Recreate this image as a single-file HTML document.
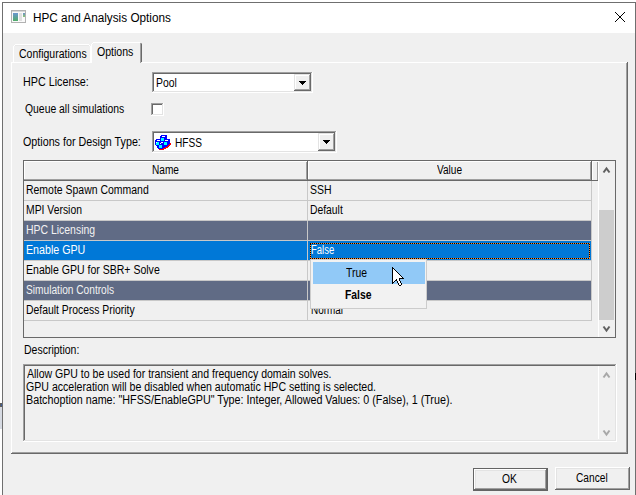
<!DOCTYPE html>
<html><head><meta charset="utf-8"><style>
html,body{margin:0;padding:0;width:636px;height:495px;overflow:hidden;background:#fff}
div{position:absolute}
.t{font-family:"Liberation Sans",sans-serif;white-space:nowrap;transform-origin:0 0}
</style></head><body>
<div style="left:0px;top:0px;width:636px;height:495px;background:#ffffff;"></div>
<div style="left:2px;top:2px;width:634px;height:493px;background:#6f6f6f;"></div>
<div style="left:3px;top:3px;width:632px;height:492px;background:#ffffff;"></div>
<div style="left:3px;top:33px;width:632px;height:462px;background:#f0f0f0;"></div>
<div style="left:11px;top:10px;width:15px;height:13px;background:#b2b2b2;"></div>
<div style="left:12px;top:11px;width:13px;height:11px;background:#d8d8d8;"></div>
<div style="left:12px;top:12px;width:13px;height:10px;background:#fafafa;"></div>
<div style="left:13px;top:13px;width:5px;height:8px;background:;background:linear-gradient(180deg,#6b96d0,#50ac68)"></div>
<div style="left:19px;top:13px;width:3px;height:8px;background:#e0e0e0;"></div>
<div style="left:23px;top:13px;width:2px;height:4px;background:;background:linear-gradient(180deg,#6a90c8,#8ac870)"></div>
<svg style="position:absolute;left:615px;top:12px" width="10" height="10" shape-rendering="crispEdges" fill="#000"><rect x="0" y="0" width="1" height="1"/><rect x="9" y="0" width="1" height="1"/><rect x="1" y="1" width="1" height="1"/><rect x="8" y="1" width="1" height="1"/><rect x="2" y="2" width="1" height="1"/><rect x="7" y="2" width="1" height="1"/><rect x="3" y="3" width="1" height="1"/><rect x="6" y="3" width="1" height="1"/><rect x="4" y="4" width="1" height="1"/><rect x="5" y="4" width="1" height="1"/><rect x="5" y="5" width="1" height="1"/><rect x="4" y="5" width="1" height="1"/><rect x="6" y="6" width="1" height="1"/><rect x="3" y="6" width="1" height="1"/><rect x="7" y="7" width="1" height="1"/><rect x="2" y="7" width="1" height="1"/><rect x="8" y="8" width="1" height="1"/><rect x="1" y="8" width="1" height="1"/><rect x="9" y="9" width="1" height="1"/><rect x="0" y="9" width="1" height="1"/><rect x="4" y="4" width="2" height="2"/></svg>
<div style="left:11px;top:62px;width:617px;height:392px;background:#f0f0f0;"></div>
<div style="left:11px;top:62px;width:616px;height:1px;background:#ffffff;"></div>
<div style="left:11px;top:62px;width:1px;height:391px;background:#ffffff;"></div>
<div style="left:627px;top:62px;width:1px;height:392px;background:#696969;"></div>
<div style="left:626px;top:63px;width:1px;height:390px;background:#a0a0a0;"></div>
<div style="left:11px;top:453px;width:617px;height:1px;background:#696969;"></div>
<div style="left:12px;top:452px;width:615px;height:1px;background:#a0a0a0;"></div>
<div style="left:13px;top:44px;width:78px;height:18px;background:#f0f0f0;"></div>
<div style="left:15px;top:44px;width:74px;height:1px;background:#ffffff;"></div>
<div style="left:13px;top:46px;width:1px;height:16px;background:#ffffff;"></div>
<div style="left:14px;top:45px;width:1px;height:1px;background:#ffffff;"></div>
<div style="left:90px;top:46px;width:1px;height:16px;background:#ffffff;"></div>
<div style="left:89px;top:45px;width:1px;height:1px;background:#ffffff;"></div>
<div style="left:15px;top:45px;width:74px;height:1px;background:#e8e8e8;"></div>
<div style="left:91px;top:42px;width:51px;height:21px;background:#f0f0f0;"></div>
<div style="left:93px;top:42px;width:47px;height:1px;background:#ffffff;"></div>
<div style="left:91px;top:44px;width:1px;height:19px;background:#ffffff;"></div>
<div style="left:92px;top:43px;width:1px;height:1px;background:#ffffff;"></div>
<div style="left:141px;top:44px;width:1px;height:18px;background:#696969;"></div>
<div style="left:140px;top:43px;width:1px;height:20px;background:#a0a0a0;"></div>
<div style="left:141px;top:43px;width:1px;height:1px;background:#a0a0a0;"></div>
<div style="left:152px;top:72px;width:161px;height:21px;background:#fff;"></div>
<div style="left:152px;top:72px;width:161px;height:1px;background:#a0a0a0;"></div>
<div style="left:152px;top:72px;width:1px;height:21px;background:#a0a0a0;"></div>
<div style="left:153px;top:73px;width:159px;height:1px;background:#696969;"></div>
<div style="left:153px;top:73px;width:1px;height:19px;background:#696969;"></div>
<div style="left:152px;top:92px;width:161px;height:1px;background:#ffffff;"></div>
<div style="left:312px;top:72px;width:1px;height:21px;background:#ffffff;"></div>
<div style="left:153px;top:91px;width:159px;height:1px;background:#e3e3e3;"></div>
<div style="left:311px;top:73px;width:1px;height:19px;background:#e3e3e3;"></div>
<div style="left:294px;top:74px;width:17px;height:17px;background:#f0f0f0;"></div>
<div style="left:294px;top:74px;width:17px;height:1px;background:#e3e3e3;"></div>
<div style="left:294px;top:74px;width:1px;height:17px;background:#e3e3e3;"></div>
<div style="left:295px;top:75px;width:15px;height:1px;background:#ffffff;"></div>
<div style="left:295px;top:75px;width:1px;height:15px;background:#ffffff;"></div>
<div style="left:294px;top:90px;width:17px;height:1px;background:#696969;"></div>
<div style="left:310px;top:74px;width:1px;height:17px;background:#696969;"></div>
<div style="left:295px;top:89px;width:15px;height:1px;background:#a0a0a0;"></div>
<div style="left:309px;top:75px;width:1px;height:15px;background:#a0a0a0;"></div>
<div style="left:299px;top:81px;width:7px;height:1px;background:#000;"></div>
<div style="left:300px;top:82px;width:5px;height:1px;background:#000;"></div>
<div style="left:301px;top:83px;width:3px;height:1px;background:#000;"></div>
<div style="left:302px;top:84px;width:1px;height:1px;background:#000;"></div>
<div style="left:151px;top:103px;width:13px;height:13px;background:#fff;"></div>
<div style="left:151px;top:103px;width:13px;height:1px;background:#a0a0a0;"></div>
<div style="left:151px;top:103px;width:1px;height:13px;background:#a0a0a0;"></div>
<div style="left:152px;top:104px;width:11px;height:1px;background:#696969;"></div>
<div style="left:152px;top:104px;width:1px;height:11px;background:#696969;"></div>
<div style="left:151px;top:115px;width:13px;height:1px;background:#ffffff;"></div>
<div style="left:163px;top:103px;width:1px;height:13px;background:#ffffff;"></div>
<div style="left:152px;top:114px;width:11px;height:1px;background:#e3e3e3;"></div>
<div style="left:162px;top:104px;width:1px;height:11px;background:#e3e3e3;"></div>
<div style="left:152px;top:131px;width:185px;height:22px;background:#fff;"></div>
<div style="left:152px;top:131px;width:185px;height:1px;background:#a0a0a0;"></div>
<div style="left:152px;top:131px;width:1px;height:22px;background:#a0a0a0;"></div>
<div style="left:153px;top:132px;width:183px;height:1px;background:#696969;"></div>
<div style="left:153px;top:132px;width:1px;height:20px;background:#696969;"></div>
<div style="left:152px;top:152px;width:185px;height:1px;background:#ffffff;"></div>
<div style="left:336px;top:131px;width:1px;height:22px;background:#ffffff;"></div>
<div style="left:153px;top:151px;width:183px;height:1px;background:#e3e3e3;"></div>
<div style="left:335px;top:132px;width:1px;height:20px;background:#e3e3e3;"></div>
<div style="left:318px;top:133px;width:17px;height:18px;background:#f0f0f0;"></div>
<div style="left:318px;top:133px;width:17px;height:1px;background:#e3e3e3;"></div>
<div style="left:318px;top:133px;width:1px;height:18px;background:#e3e3e3;"></div>
<div style="left:319px;top:134px;width:15px;height:1px;background:#ffffff;"></div>
<div style="left:319px;top:134px;width:1px;height:16px;background:#ffffff;"></div>
<div style="left:318px;top:150px;width:17px;height:1px;background:#696969;"></div>
<div style="left:334px;top:133px;width:1px;height:18px;background:#696969;"></div>
<div style="left:319px;top:149px;width:15px;height:1px;background:#a0a0a0;"></div>
<div style="left:333px;top:134px;width:1px;height:16px;background:#a0a0a0;"></div>
<div style="left:323px;top:140px;width:7px;height:1px;background:#000;"></div>
<div style="left:324px;top:141px;width:5px;height:1px;background:#000;"></div>
<div style="left:325px;top:142px;width:3px;height:1px;background:#000;"></div>
<div style="left:326px;top:143px;width:1px;height:1px;background:#000;"></div>
<svg style="position:absolute;left:155px;top:135px" width="16" height="16" shape-rendering="crispEdges"><rect x="6" y="0" width="6" height="1" fill="#00f"/><rect x="5" y="1" width="7" height="4" fill="#00f"/><rect x="1" y="4" width="14" height="1" fill="#00f"/><rect x="0" y="5" width="15" height="5" fill="#00f"/><rect x="1" y="10" width="12" height="1" fill="#00f"/><rect x="2" y="11" width="10" height="1" fill="#00f"/><rect x="2" y="12" width="8" height="1" fill="#00f"/><rect x="3" y="13" width="5" height="1" fill="#00f"/><rect x="15" y="8" width="1" height="1" fill="#f00"/><rect x="14" y="9" width="2" height="1" fill="#f00"/><rect x="13" y="10" width="2" height="1" fill="#f00"/><rect x="12" y="11" width="2" height="1" fill="#f00"/><rect x="10" y="12" width="3" height="1" fill="#f00"/><rect x="8" y="13" width="3" height="1" fill="#f00"/><rect x="4" y="14" width="5" height="1" fill="#f00"/><rect x="6" y="3" width="3" height="3" fill="#0ff"/><rect x="1" y="7" width="3" height="3" fill="#0ff"/><rect x="9" y="7" width="3" height="3" fill="#0ff"/><rect x="4" y="10" width="3" height="3" fill="#0ff"/><rect x="7" y="1" width="3" height="1" fill="#fff"/><rect x="2" y="5" width="3" height="1" fill="#fff"/><rect x="10" y="5" width="3" height="1" fill="#fff"/><rect x="6" y="7" width="2" height="1" fill="#fff"/><rect x="5" y="8" width="1" height="1" fill="#fff"/><rect x="1" y="7" width="1" height="1" fill="#fff"/></svg>
<div style="left:23px;top:160px;width:593px;height:178px;background:#696969;"></div>
<div style="left:24px;top:161px;width:591px;height:176px;background:#f0f0f0;"></div>
<div style="left:24px;top:161px;width:284px;height:20px;background:#f0f0f0;"></div>
<div style="left:24px;top:161px;width:284px;height:1px;background:#ffffff;"></div>
<div style="left:24px;top:161px;width:1px;height:20px;background:#ffffff;"></div>
<div style="left:24px;top:180px;width:284px;height:1px;background:#696969;"></div>
<div style="left:24px;top:179px;width:283px;height:1px;background:#a0a0a0;"></div>
<div style="left:307px;top:161px;width:1px;height:20px;background:#696969;"></div>
<div style="left:306px;top:162px;width:1px;height:18px;background:#a0a0a0;"></div>
<div style="left:308px;top:161px;width:284px;height:20px;background:#f0f0f0;"></div>
<div style="left:308px;top:161px;width:284px;height:1px;background:#ffffff;"></div>
<div style="left:308px;top:161px;width:1px;height:20px;background:#ffffff;"></div>
<div style="left:308px;top:180px;width:284px;height:1px;background:#696969;"></div>
<div style="left:308px;top:179px;width:283px;height:1px;background:#a0a0a0;"></div>
<div style="left:591px;top:161px;width:1px;height:20px;background:#696969;"></div>
<div style="left:590px;top:162px;width:1px;height:18px;background:#a0a0a0;"></div>
<div style="left:592px;top:161px;width:6px;height:20px;background:#f0f0f0;"></div>
<div style="left:592px;top:161px;width:6px;height:1px;background:#ffffff;"></div>
<div style="left:592px;top:161px;width:1px;height:20px;background:#ffffff;"></div>
<div style="left:597px;top:162px;width:1px;height:18px;background:#a0a0a0;"></div>
<div style="left:592px;top:180px;width:6px;height:1px;background:#696969;"></div>
<div style="left:24px;top:181px;width:567px;height:19px;background:#f0f0f0;"></div>
<div style="left:24px;top:200px;width:567px;height:1px;background:#c8c8c8;"></div>
<div style="left:24px;top:201px;width:567px;height:19px;background:#f0f0f0;"></div>
<div style="left:24px;top:220px;width:567px;height:1px;background:#c8c8c8;"></div>
<div style="left:24px;top:221px;width:567px;height:19px;background:#606b85;"></div>
<div style="left:24px;top:240px;width:567px;height:1px;background:#c8c8c8;"></div>
<div style="left:24px;top:241px;width:567px;height:19px;background:#0078d7;"></div>
<div style="left:24px;top:260px;width:567px;height:1px;background:#c8c8c8;"></div>
<div style="left:24px;top:261px;width:567px;height:19px;background:#f0f0f0;"></div>
<div style="left:24px;top:280px;width:567px;height:1px;background:#c8c8c8;"></div>
<div style="left:24px;top:281px;width:567px;height:19px;background:#606b85;"></div>
<div style="left:24px;top:300px;width:567px;height:1px;background:#c8c8c8;"></div>
<div style="left:24px;top:301px;width:567px;height:19px;background:#f0f0f0;"></div>
<div style="left:24px;top:320px;width:567px;height:1px;background:#c8c8c8;"></div>
<div style="left:307px;top:181px;width:1px;height:140px;background:#c8c8c8;"></div>
<div style="left:591px;top:181px;width:1px;height:140px;background:#c8c8c8;"></div>
<svg style="position:absolute;left:310px;top:243px" width="280" height="16" shape-rendering="crispEdges"><rect x="0" y="0" width="1" height="1" fill="#000"/><rect x="0" y="15" width="1" height="1" fill="#000"/><rect x="1" y="0" width="1" height="1" fill="#ff8728"/><rect x="1" y="15" width="1" height="1" fill="#ff8728"/><rect x="2" y="0" width="1" height="1" fill="#000"/><rect x="2" y="15" width="1" height="1" fill="#000"/><rect x="3" y="0" width="1" height="1" fill="#ff8728"/><rect x="3" y="15" width="1" height="1" fill="#ff8728"/><rect x="4" y="0" width="1" height="1" fill="#000"/><rect x="4" y="15" width="1" height="1" fill="#000"/><rect x="5" y="0" width="1" height="1" fill="#ff8728"/><rect x="5" y="15" width="1" height="1" fill="#ff8728"/><rect x="6" y="0" width="1" height="1" fill="#000"/><rect x="6" y="15" width="1" height="1" fill="#000"/><rect x="7" y="0" width="1" height="1" fill="#ff8728"/><rect x="7" y="15" width="1" height="1" fill="#ff8728"/><rect x="8" y="0" width="1" height="1" fill="#000"/><rect x="8" y="15" width="1" height="1" fill="#000"/><rect x="9" y="0" width="1" height="1" fill="#ff8728"/><rect x="9" y="15" width="1" height="1" fill="#ff8728"/><rect x="10" y="0" width="1" height="1" fill="#000"/><rect x="10" y="15" width="1" height="1" fill="#000"/><rect x="11" y="0" width="1" height="1" fill="#ff8728"/><rect x="11" y="15" width="1" height="1" fill="#ff8728"/><rect x="12" y="0" width="1" height="1" fill="#000"/><rect x="12" y="15" width="1" height="1" fill="#000"/><rect x="13" y="0" width="1" height="1" fill="#ff8728"/><rect x="13" y="15" width="1" height="1" fill="#ff8728"/><rect x="14" y="0" width="1" height="1" fill="#000"/><rect x="14" y="15" width="1" height="1" fill="#000"/><rect x="15" y="0" width="1" height="1" fill="#ff8728"/><rect x="15" y="15" width="1" height="1" fill="#ff8728"/><rect x="16" y="0" width="1" height="1" fill="#000"/><rect x="16" y="15" width="1" height="1" fill="#000"/><rect x="17" y="0" width="1" height="1" fill="#ff8728"/><rect x="17" y="15" width="1" height="1" fill="#ff8728"/><rect x="18" y="0" width="1" height="1" fill="#000"/><rect x="18" y="15" width="1" height="1" fill="#000"/><rect x="19" y="0" width="1" height="1" fill="#ff8728"/><rect x="19" y="15" width="1" height="1" fill="#ff8728"/><rect x="20" y="0" width="1" height="1" fill="#000"/><rect x="20" y="15" width="1" height="1" fill="#000"/><rect x="21" y="0" width="1" height="1" fill="#ff8728"/><rect x="21" y="15" width="1" height="1" fill="#ff8728"/><rect x="22" y="0" width="1" height="1" fill="#000"/><rect x="22" y="15" width="1" height="1" fill="#000"/><rect x="23" y="0" width="1" height="1" fill="#ff8728"/><rect x="23" y="15" width="1" height="1" fill="#ff8728"/><rect x="24" y="0" width="1" height="1" fill="#000"/><rect x="24" y="15" width="1" height="1" fill="#000"/><rect x="25" y="0" width="1" height="1" fill="#ff8728"/><rect x="25" y="15" width="1" height="1" fill="#ff8728"/><rect x="26" y="0" width="1" height="1" fill="#000"/><rect x="26" y="15" width="1" height="1" fill="#000"/><rect x="27" y="0" width="1" height="1" fill="#ff8728"/><rect x="27" y="15" width="1" height="1" fill="#ff8728"/><rect x="28" y="0" width="1" height="1" fill="#000"/><rect x="28" y="15" width="1" height="1" fill="#000"/><rect x="29" y="0" width="1" height="1" fill="#ff8728"/><rect x="29" y="15" width="1" height="1" fill="#ff8728"/><rect x="30" y="0" width="1" height="1" fill="#000"/><rect x="30" y="15" width="1" height="1" fill="#000"/><rect x="31" y="0" width="1" height="1" fill="#ff8728"/><rect x="31" y="15" width="1" height="1" fill="#ff8728"/><rect x="32" y="0" width="1" height="1" fill="#000"/><rect x="32" y="15" width="1" height="1" fill="#000"/><rect x="33" y="0" width="1" height="1" fill="#ff8728"/><rect x="33" y="15" width="1" height="1" fill="#ff8728"/><rect x="34" y="0" width="1" height="1" fill="#000"/><rect x="34" y="15" width="1" height="1" fill="#000"/><rect x="35" y="0" width="1" height="1" fill="#ff8728"/><rect x="35" y="15" width="1" height="1" fill="#ff8728"/><rect x="36" y="0" width="1" height="1" fill="#000"/><rect x="36" y="15" width="1" height="1" fill="#000"/><rect x="37" y="0" width="1" height="1" fill="#ff8728"/><rect x="37" y="15" width="1" height="1" fill="#ff8728"/><rect x="38" y="0" width="1" height="1" fill="#000"/><rect x="38" y="15" width="1" height="1" fill="#000"/><rect x="39" y="0" width="1" height="1" fill="#ff8728"/><rect x="39" y="15" width="1" height="1" fill="#ff8728"/><rect x="40" y="0" width="1" height="1" fill="#000"/><rect x="40" y="15" width="1" height="1" fill="#000"/><rect x="41" y="0" width="1" height="1" fill="#ff8728"/><rect x="41" y="15" width="1" height="1" fill="#ff8728"/><rect x="42" y="0" width="1" height="1" fill="#000"/><rect x="42" y="15" width="1" height="1" fill="#000"/><rect x="43" y="0" width="1" height="1" fill="#ff8728"/><rect x="43" y="15" width="1" height="1" fill="#ff8728"/><rect x="44" y="0" width="1" height="1" fill="#000"/><rect x="44" y="15" width="1" height="1" fill="#000"/><rect x="45" y="0" width="1" height="1" fill="#ff8728"/><rect x="45" y="15" width="1" height="1" fill="#ff8728"/><rect x="46" y="0" width="1" height="1" fill="#000"/><rect x="46" y="15" width="1" height="1" fill="#000"/><rect x="47" y="0" width="1" height="1" fill="#ff8728"/><rect x="47" y="15" width="1" height="1" fill="#ff8728"/><rect x="48" y="0" width="1" height="1" fill="#000"/><rect x="48" y="15" width="1" height="1" fill="#000"/><rect x="49" y="0" width="1" height="1" fill="#ff8728"/><rect x="49" y="15" width="1" height="1" fill="#ff8728"/><rect x="50" y="0" width="1" height="1" fill="#000"/><rect x="50" y="15" width="1" height="1" fill="#000"/><rect x="51" y="0" width="1" height="1" fill="#ff8728"/><rect x="51" y="15" width="1" height="1" fill="#ff8728"/><rect x="52" y="0" width="1" height="1" fill="#000"/><rect x="52" y="15" width="1" height="1" fill="#000"/><rect x="53" y="0" width="1" height="1" fill="#ff8728"/><rect x="53" y="15" width="1" height="1" fill="#ff8728"/><rect x="54" y="0" width="1" height="1" fill="#000"/><rect x="54" y="15" width="1" height="1" fill="#000"/><rect x="55" y="0" width="1" height="1" fill="#ff8728"/><rect x="55" y="15" width="1" height="1" fill="#ff8728"/><rect x="56" y="0" width="1" height="1" fill="#000"/><rect x="56" y="15" width="1" height="1" fill="#000"/><rect x="57" y="0" width="1" height="1" fill="#ff8728"/><rect x="57" y="15" width="1" height="1" fill="#ff8728"/><rect x="58" y="0" width="1" height="1" fill="#000"/><rect x="58" y="15" width="1" height="1" fill="#000"/><rect x="59" y="0" width="1" height="1" fill="#ff8728"/><rect x="59" y="15" width="1" height="1" fill="#ff8728"/><rect x="60" y="0" width="1" height="1" fill="#000"/><rect x="60" y="15" width="1" height="1" fill="#000"/><rect x="61" y="0" width="1" height="1" fill="#ff8728"/><rect x="61" y="15" width="1" height="1" fill="#ff8728"/><rect x="62" y="0" width="1" height="1" fill="#000"/><rect x="62" y="15" width="1" height="1" fill="#000"/><rect x="63" y="0" width="1" height="1" fill="#ff8728"/><rect x="63" y="15" width="1" height="1" fill="#ff8728"/><rect x="64" y="0" width="1" height="1" fill="#000"/><rect x="64" y="15" width="1" height="1" fill="#000"/><rect x="65" y="0" width="1" height="1" fill="#ff8728"/><rect x="65" y="15" width="1" height="1" fill="#ff8728"/><rect x="66" y="0" width="1" height="1" fill="#000"/><rect x="66" y="15" width="1" height="1" fill="#000"/><rect x="67" y="0" width="1" height="1" fill="#ff8728"/><rect x="67" y="15" width="1" height="1" fill="#ff8728"/><rect x="68" y="0" width="1" height="1" fill="#000"/><rect x="68" y="15" width="1" height="1" fill="#000"/><rect x="69" y="0" width="1" height="1" fill="#ff8728"/><rect x="69" y="15" width="1" height="1" fill="#ff8728"/><rect x="70" y="0" width="1" height="1" fill="#000"/><rect x="70" y="15" width="1" height="1" fill="#000"/><rect x="71" y="0" width="1" height="1" fill="#ff8728"/><rect x="71" y="15" width="1" height="1" fill="#ff8728"/><rect x="72" y="0" width="1" height="1" fill="#000"/><rect x="72" y="15" width="1" height="1" fill="#000"/><rect x="73" y="0" width="1" height="1" fill="#ff8728"/><rect x="73" y="15" width="1" height="1" fill="#ff8728"/><rect x="74" y="0" width="1" height="1" fill="#000"/><rect x="74" y="15" width="1" height="1" fill="#000"/><rect x="75" y="0" width="1" height="1" fill="#ff8728"/><rect x="75" y="15" width="1" height="1" fill="#ff8728"/><rect x="76" y="0" width="1" height="1" fill="#000"/><rect x="76" y="15" width="1" height="1" fill="#000"/><rect x="77" y="0" width="1" height="1" fill="#ff8728"/><rect x="77" y="15" width="1" height="1" fill="#ff8728"/><rect x="78" y="0" width="1" height="1" fill="#000"/><rect x="78" y="15" width="1" height="1" fill="#000"/><rect x="79" y="0" width="1" height="1" fill="#ff8728"/><rect x="79" y="15" width="1" height="1" fill="#ff8728"/><rect x="80" y="0" width="1" height="1" fill="#000"/><rect x="80" y="15" width="1" height="1" fill="#000"/><rect x="81" y="0" width="1" height="1" fill="#ff8728"/><rect x="81" y="15" width="1" height="1" fill="#ff8728"/><rect x="82" y="0" width="1" height="1" fill="#000"/><rect x="82" y="15" width="1" height="1" fill="#000"/><rect x="83" y="0" width="1" height="1" fill="#ff8728"/><rect x="83" y="15" width="1" height="1" fill="#ff8728"/><rect x="84" y="0" width="1" height="1" fill="#000"/><rect x="84" y="15" width="1" height="1" fill="#000"/><rect x="85" y="0" width="1" height="1" fill="#ff8728"/><rect x="85" y="15" width="1" height="1" fill="#ff8728"/><rect x="86" y="0" width="1" height="1" fill="#000"/><rect x="86" y="15" width="1" height="1" fill="#000"/><rect x="87" y="0" width="1" height="1" fill="#ff8728"/><rect x="87" y="15" width="1" height="1" fill="#ff8728"/><rect x="88" y="0" width="1" height="1" fill="#000"/><rect x="88" y="15" width="1" height="1" fill="#000"/><rect x="89" y="0" width="1" height="1" fill="#ff8728"/><rect x="89" y="15" width="1" height="1" fill="#ff8728"/><rect x="90" y="0" width="1" height="1" fill="#000"/><rect x="90" y="15" width="1" height="1" fill="#000"/><rect x="91" y="0" width="1" height="1" fill="#ff8728"/><rect x="91" y="15" width="1" height="1" fill="#ff8728"/><rect x="92" y="0" width="1" height="1" fill="#000"/><rect x="92" y="15" width="1" height="1" fill="#000"/><rect x="93" y="0" width="1" height="1" fill="#ff8728"/><rect x="93" y="15" width="1" height="1" fill="#ff8728"/><rect x="94" y="0" width="1" height="1" fill="#000"/><rect x="94" y="15" width="1" height="1" fill="#000"/><rect x="95" y="0" width="1" height="1" fill="#ff8728"/><rect x="95" y="15" width="1" height="1" fill="#ff8728"/><rect x="96" y="0" width="1" height="1" fill="#000"/><rect x="96" y="15" width="1" height="1" fill="#000"/><rect x="97" y="0" width="1" height="1" fill="#ff8728"/><rect x="97" y="15" width="1" height="1" fill="#ff8728"/><rect x="98" y="0" width="1" height="1" fill="#000"/><rect x="98" y="15" width="1" height="1" fill="#000"/><rect x="99" y="0" width="1" height="1" fill="#ff8728"/><rect x="99" y="15" width="1" height="1" fill="#ff8728"/><rect x="100" y="0" width="1" height="1" fill="#000"/><rect x="100" y="15" width="1" height="1" fill="#000"/><rect x="101" y="0" width="1" height="1" fill="#ff8728"/><rect x="101" y="15" width="1" height="1" fill="#ff8728"/><rect x="102" y="0" width="1" height="1" fill="#000"/><rect x="102" y="15" width="1" height="1" fill="#000"/><rect x="103" y="0" width="1" height="1" fill="#ff8728"/><rect x="103" y="15" width="1" height="1" fill="#ff8728"/><rect x="104" y="0" width="1" height="1" fill="#000"/><rect x="104" y="15" width="1" height="1" fill="#000"/><rect x="105" y="0" width="1" height="1" fill="#ff8728"/><rect x="105" y="15" width="1" height="1" fill="#ff8728"/><rect x="106" y="0" width="1" height="1" fill="#000"/><rect x="106" y="15" width="1" height="1" fill="#000"/><rect x="107" y="0" width="1" height="1" fill="#ff8728"/><rect x="107" y="15" width="1" height="1" fill="#ff8728"/><rect x="108" y="0" width="1" height="1" fill="#000"/><rect x="108" y="15" width="1" height="1" fill="#000"/><rect x="109" y="0" width="1" height="1" fill="#ff8728"/><rect x="109" y="15" width="1" height="1" fill="#ff8728"/><rect x="110" y="0" width="1" height="1" fill="#000"/><rect x="110" y="15" width="1" height="1" fill="#000"/><rect x="111" y="0" width="1" height="1" fill="#ff8728"/><rect x="111" y="15" width="1" height="1" fill="#ff8728"/><rect x="112" y="0" width="1" height="1" fill="#000"/><rect x="112" y="15" width="1" height="1" fill="#000"/><rect x="113" y="0" width="1" height="1" fill="#ff8728"/><rect x="113" y="15" width="1" height="1" fill="#ff8728"/><rect x="114" y="0" width="1" height="1" fill="#000"/><rect x="114" y="15" width="1" height="1" fill="#000"/><rect x="115" y="0" width="1" height="1" fill="#ff8728"/><rect x="115" y="15" width="1" height="1" fill="#ff8728"/><rect x="116" y="0" width="1" height="1" fill="#000"/><rect x="116" y="15" width="1" height="1" fill="#000"/><rect x="117" y="0" width="1" height="1" fill="#ff8728"/><rect x="117" y="15" width="1" height="1" fill="#ff8728"/><rect x="118" y="0" width="1" height="1" fill="#000"/><rect x="118" y="15" width="1" height="1" fill="#000"/><rect x="119" y="0" width="1" height="1" fill="#ff8728"/><rect x="119" y="15" width="1" height="1" fill="#ff8728"/><rect x="120" y="0" width="1" height="1" fill="#000"/><rect x="120" y="15" width="1" height="1" fill="#000"/><rect x="121" y="0" width="1" height="1" fill="#ff8728"/><rect x="121" y="15" width="1" height="1" fill="#ff8728"/><rect x="122" y="0" width="1" height="1" fill="#000"/><rect x="122" y="15" width="1" height="1" fill="#000"/><rect x="123" y="0" width="1" height="1" fill="#ff8728"/><rect x="123" y="15" width="1" height="1" fill="#ff8728"/><rect x="124" y="0" width="1" height="1" fill="#000"/><rect x="124" y="15" width="1" height="1" fill="#000"/><rect x="125" y="0" width="1" height="1" fill="#ff8728"/><rect x="125" y="15" width="1" height="1" fill="#ff8728"/><rect x="126" y="0" width="1" height="1" fill="#000"/><rect x="126" y="15" width="1" height="1" fill="#000"/><rect x="127" y="0" width="1" height="1" fill="#ff8728"/><rect x="127" y="15" width="1" height="1" fill="#ff8728"/><rect x="128" y="0" width="1" height="1" fill="#000"/><rect x="128" y="15" width="1" height="1" fill="#000"/><rect x="129" y="0" width="1" height="1" fill="#ff8728"/><rect x="129" y="15" width="1" height="1" fill="#ff8728"/><rect x="130" y="0" width="1" height="1" fill="#000"/><rect x="130" y="15" width="1" height="1" fill="#000"/><rect x="131" y="0" width="1" height="1" fill="#ff8728"/><rect x="131" y="15" width="1" height="1" fill="#ff8728"/><rect x="132" y="0" width="1" height="1" fill="#000"/><rect x="132" y="15" width="1" height="1" fill="#000"/><rect x="133" y="0" width="1" height="1" fill="#ff8728"/><rect x="133" y="15" width="1" height="1" fill="#ff8728"/><rect x="134" y="0" width="1" height="1" fill="#000"/><rect x="134" y="15" width="1" height="1" fill="#000"/><rect x="135" y="0" width="1" height="1" fill="#ff8728"/><rect x="135" y="15" width="1" height="1" fill="#ff8728"/><rect x="136" y="0" width="1" height="1" fill="#000"/><rect x="136" y="15" width="1" height="1" fill="#000"/><rect x="137" y="0" width="1" height="1" fill="#ff8728"/><rect x="137" y="15" width="1" height="1" fill="#ff8728"/><rect x="138" y="0" width="1" height="1" fill="#000"/><rect x="138" y="15" width="1" height="1" fill="#000"/><rect x="139" y="0" width="1" height="1" fill="#ff8728"/><rect x="139" y="15" width="1" height="1" fill="#ff8728"/><rect x="140" y="0" width="1" height="1" fill="#000"/><rect x="140" y="15" width="1" height="1" fill="#000"/><rect x="141" y="0" width="1" height="1" fill="#ff8728"/><rect x="141" y="15" width="1" height="1" fill="#ff8728"/><rect x="142" y="0" width="1" height="1" fill="#000"/><rect x="142" y="15" width="1" height="1" fill="#000"/><rect x="143" y="0" width="1" height="1" fill="#ff8728"/><rect x="143" y="15" width="1" height="1" fill="#ff8728"/><rect x="144" y="0" width="1" height="1" fill="#000"/><rect x="144" y="15" width="1" height="1" fill="#000"/><rect x="145" y="0" width="1" height="1" fill="#ff8728"/><rect x="145" y="15" width="1" height="1" fill="#ff8728"/><rect x="146" y="0" width="1" height="1" fill="#000"/><rect x="146" y="15" width="1" height="1" fill="#000"/><rect x="147" y="0" width="1" height="1" fill="#ff8728"/><rect x="147" y="15" width="1" height="1" fill="#ff8728"/><rect x="148" y="0" width="1" height="1" fill="#000"/><rect x="148" y="15" width="1" height="1" fill="#000"/><rect x="149" y="0" width="1" height="1" fill="#ff8728"/><rect x="149" y="15" width="1" height="1" fill="#ff8728"/><rect x="150" y="0" width="1" height="1" fill="#000"/><rect x="150" y="15" width="1" height="1" fill="#000"/><rect x="151" y="0" width="1" height="1" fill="#ff8728"/><rect x="151" y="15" width="1" height="1" fill="#ff8728"/><rect x="152" y="0" width="1" height="1" fill="#000"/><rect x="152" y="15" width="1" height="1" fill="#000"/><rect x="153" y="0" width="1" height="1" fill="#ff8728"/><rect x="153" y="15" width="1" height="1" fill="#ff8728"/><rect x="154" y="0" width="1" height="1" fill="#000"/><rect x="154" y="15" width="1" height="1" fill="#000"/><rect x="155" y="0" width="1" height="1" fill="#ff8728"/><rect x="155" y="15" width="1" height="1" fill="#ff8728"/><rect x="156" y="0" width="1" height="1" fill="#000"/><rect x="156" y="15" width="1" height="1" fill="#000"/><rect x="157" y="0" width="1" height="1" fill="#ff8728"/><rect x="157" y="15" width="1" height="1" fill="#ff8728"/><rect x="158" y="0" width="1" height="1" fill="#000"/><rect x="158" y="15" width="1" height="1" fill="#000"/><rect x="159" y="0" width="1" height="1" fill="#ff8728"/><rect x="159" y="15" width="1" height="1" fill="#ff8728"/><rect x="160" y="0" width="1" height="1" fill="#000"/><rect x="160" y="15" width="1" height="1" fill="#000"/><rect x="161" y="0" width="1" height="1" fill="#ff8728"/><rect x="161" y="15" width="1" height="1" fill="#ff8728"/><rect x="162" y="0" width="1" height="1" fill="#000"/><rect x="162" y="15" width="1" height="1" fill="#000"/><rect x="163" y="0" width="1" height="1" fill="#ff8728"/><rect x="163" y="15" width="1" height="1" fill="#ff8728"/><rect x="164" y="0" width="1" height="1" fill="#000"/><rect x="164" y="15" width="1" height="1" fill="#000"/><rect x="165" y="0" width="1" height="1" fill="#ff8728"/><rect x="165" y="15" width="1" height="1" fill="#ff8728"/><rect x="166" y="0" width="1" height="1" fill="#000"/><rect x="166" y="15" width="1" height="1" fill="#000"/><rect x="167" y="0" width="1" height="1" fill="#ff8728"/><rect x="167" y="15" width="1" height="1" fill="#ff8728"/><rect x="168" y="0" width="1" height="1" fill="#000"/><rect x="168" y="15" width="1" height="1" fill="#000"/><rect x="169" y="0" width="1" height="1" fill="#ff8728"/><rect x="169" y="15" width="1" height="1" fill="#ff8728"/><rect x="170" y="0" width="1" height="1" fill="#000"/><rect x="170" y="15" width="1" height="1" fill="#000"/><rect x="171" y="0" width="1" height="1" fill="#ff8728"/><rect x="171" y="15" width="1" height="1" fill="#ff8728"/><rect x="172" y="0" width="1" height="1" fill="#000"/><rect x="172" y="15" width="1" height="1" fill="#000"/><rect x="173" y="0" width="1" height="1" fill="#ff8728"/><rect x="173" y="15" width="1" height="1" fill="#ff8728"/><rect x="174" y="0" width="1" height="1" fill="#000"/><rect x="174" y="15" width="1" height="1" fill="#000"/><rect x="175" y="0" width="1" height="1" fill="#ff8728"/><rect x="175" y="15" width="1" height="1" fill="#ff8728"/><rect x="176" y="0" width="1" height="1" fill="#000"/><rect x="176" y="15" width="1" height="1" fill="#000"/><rect x="177" y="0" width="1" height="1" fill="#ff8728"/><rect x="177" y="15" width="1" height="1" fill="#ff8728"/><rect x="178" y="0" width="1" height="1" fill="#000"/><rect x="178" y="15" width="1" height="1" fill="#000"/><rect x="179" y="0" width="1" height="1" fill="#ff8728"/><rect x="179" y="15" width="1" height="1" fill="#ff8728"/><rect x="180" y="0" width="1" height="1" fill="#000"/><rect x="180" y="15" width="1" height="1" fill="#000"/><rect x="181" y="0" width="1" height="1" fill="#ff8728"/><rect x="181" y="15" width="1" height="1" fill="#ff8728"/><rect x="182" y="0" width="1" height="1" fill="#000"/><rect x="182" y="15" width="1" height="1" fill="#000"/><rect x="183" y="0" width="1" height="1" fill="#ff8728"/><rect x="183" y="15" width="1" height="1" fill="#ff8728"/><rect x="184" y="0" width="1" height="1" fill="#000"/><rect x="184" y="15" width="1" height="1" fill="#000"/><rect x="185" y="0" width="1" height="1" fill="#ff8728"/><rect x="185" y="15" width="1" height="1" fill="#ff8728"/><rect x="186" y="0" width="1" height="1" fill="#000"/><rect x="186" y="15" width="1" height="1" fill="#000"/><rect x="187" y="0" width="1" height="1" fill="#ff8728"/><rect x="187" y="15" width="1" height="1" fill="#ff8728"/><rect x="188" y="0" width="1" height="1" fill="#000"/><rect x="188" y="15" width="1" height="1" fill="#000"/><rect x="189" y="0" width="1" height="1" fill="#ff8728"/><rect x="189" y="15" width="1" height="1" fill="#ff8728"/><rect x="190" y="0" width="1" height="1" fill="#000"/><rect x="190" y="15" width="1" height="1" fill="#000"/><rect x="191" y="0" width="1" height="1" fill="#ff8728"/><rect x="191" y="15" width="1" height="1" fill="#ff8728"/><rect x="192" y="0" width="1" height="1" fill="#000"/><rect x="192" y="15" width="1" height="1" fill="#000"/><rect x="193" y="0" width="1" height="1" fill="#ff8728"/><rect x="193" y="15" width="1" height="1" fill="#ff8728"/><rect x="194" y="0" width="1" height="1" fill="#000"/><rect x="194" y="15" width="1" height="1" fill="#000"/><rect x="195" y="0" width="1" height="1" fill="#ff8728"/><rect x="195" y="15" width="1" height="1" fill="#ff8728"/><rect x="196" y="0" width="1" height="1" fill="#000"/><rect x="196" y="15" width="1" height="1" fill="#000"/><rect x="197" y="0" width="1" height="1" fill="#ff8728"/><rect x="197" y="15" width="1" height="1" fill="#ff8728"/><rect x="198" y="0" width="1" height="1" fill="#000"/><rect x="198" y="15" width="1" height="1" fill="#000"/><rect x="199" y="0" width="1" height="1" fill="#ff8728"/><rect x="199" y="15" width="1" height="1" fill="#ff8728"/><rect x="200" y="0" width="1" height="1" fill="#000"/><rect x="200" y="15" width="1" height="1" fill="#000"/><rect x="201" y="0" width="1" height="1" fill="#ff8728"/><rect x="201" y="15" width="1" height="1" fill="#ff8728"/><rect x="202" y="0" width="1" height="1" fill="#000"/><rect x="202" y="15" width="1" height="1" fill="#000"/><rect x="203" y="0" width="1" height="1" fill="#ff8728"/><rect x="203" y="15" width="1" height="1" fill="#ff8728"/><rect x="204" y="0" width="1" height="1" fill="#000"/><rect x="204" y="15" width="1" height="1" fill="#000"/><rect x="205" y="0" width="1" height="1" fill="#ff8728"/><rect x="205" y="15" width="1" height="1" fill="#ff8728"/><rect x="206" y="0" width="1" height="1" fill="#000"/><rect x="206" y="15" width="1" height="1" fill="#000"/><rect x="207" y="0" width="1" height="1" fill="#ff8728"/><rect x="207" y="15" width="1" height="1" fill="#ff8728"/><rect x="208" y="0" width="1" height="1" fill="#000"/><rect x="208" y="15" width="1" height="1" fill="#000"/><rect x="209" y="0" width="1" height="1" fill="#ff8728"/><rect x="209" y="15" width="1" height="1" fill="#ff8728"/><rect x="210" y="0" width="1" height="1" fill="#000"/><rect x="210" y="15" width="1" height="1" fill="#000"/><rect x="211" y="0" width="1" height="1" fill="#ff8728"/><rect x="211" y="15" width="1" height="1" fill="#ff8728"/><rect x="212" y="0" width="1" height="1" fill="#000"/><rect x="212" y="15" width="1" height="1" fill="#000"/><rect x="213" y="0" width="1" height="1" fill="#ff8728"/><rect x="213" y="15" width="1" height="1" fill="#ff8728"/><rect x="214" y="0" width="1" height="1" fill="#000"/><rect x="214" y="15" width="1" height="1" fill="#000"/><rect x="215" y="0" width="1" height="1" fill="#ff8728"/><rect x="215" y="15" width="1" height="1" fill="#ff8728"/><rect x="216" y="0" width="1" height="1" fill="#000"/><rect x="216" y="15" width="1" height="1" fill="#000"/><rect x="217" y="0" width="1" height="1" fill="#ff8728"/><rect x="217" y="15" width="1" height="1" fill="#ff8728"/><rect x="218" y="0" width="1" height="1" fill="#000"/><rect x="218" y="15" width="1" height="1" fill="#000"/><rect x="219" y="0" width="1" height="1" fill="#ff8728"/><rect x="219" y="15" width="1" height="1" fill="#ff8728"/><rect x="220" y="0" width="1" height="1" fill="#000"/><rect x="220" y="15" width="1" height="1" fill="#000"/><rect x="221" y="0" width="1" height="1" fill="#ff8728"/><rect x="221" y="15" width="1" height="1" fill="#ff8728"/><rect x="222" y="0" width="1" height="1" fill="#000"/><rect x="222" y="15" width="1" height="1" fill="#000"/><rect x="223" y="0" width="1" height="1" fill="#ff8728"/><rect x="223" y="15" width="1" height="1" fill="#ff8728"/><rect x="224" y="0" width="1" height="1" fill="#000"/><rect x="224" y="15" width="1" height="1" fill="#000"/><rect x="225" y="0" width="1" height="1" fill="#ff8728"/><rect x="225" y="15" width="1" height="1" fill="#ff8728"/><rect x="226" y="0" width="1" height="1" fill="#000"/><rect x="226" y="15" width="1" height="1" fill="#000"/><rect x="227" y="0" width="1" height="1" fill="#ff8728"/><rect x="227" y="15" width="1" height="1" fill="#ff8728"/><rect x="228" y="0" width="1" height="1" fill="#000"/><rect x="228" y="15" width="1" height="1" fill="#000"/><rect x="229" y="0" width="1" height="1" fill="#ff8728"/><rect x="229" y="15" width="1" height="1" fill="#ff8728"/><rect x="230" y="0" width="1" height="1" fill="#000"/><rect x="230" y="15" width="1" height="1" fill="#000"/><rect x="231" y="0" width="1" height="1" fill="#ff8728"/><rect x="231" y="15" width="1" height="1" fill="#ff8728"/><rect x="232" y="0" width="1" height="1" fill="#000"/><rect x="232" y="15" width="1" height="1" fill="#000"/><rect x="233" y="0" width="1" height="1" fill="#ff8728"/><rect x="233" y="15" width="1" height="1" fill="#ff8728"/><rect x="234" y="0" width="1" height="1" fill="#000"/><rect x="234" y="15" width="1" height="1" fill="#000"/><rect x="235" y="0" width="1" height="1" fill="#ff8728"/><rect x="235" y="15" width="1" height="1" fill="#ff8728"/><rect x="236" y="0" width="1" height="1" fill="#000"/><rect x="236" y="15" width="1" height="1" fill="#000"/><rect x="237" y="0" width="1" height="1" fill="#ff8728"/><rect x="237" y="15" width="1" height="1" fill="#ff8728"/><rect x="238" y="0" width="1" height="1" fill="#000"/><rect x="238" y="15" width="1" height="1" fill="#000"/><rect x="239" y="0" width="1" height="1" fill="#ff8728"/><rect x="239" y="15" width="1" height="1" fill="#ff8728"/><rect x="240" y="0" width="1" height="1" fill="#000"/><rect x="240" y="15" width="1" height="1" fill="#000"/><rect x="241" y="0" width="1" height="1" fill="#ff8728"/><rect x="241" y="15" width="1" height="1" fill="#ff8728"/><rect x="242" y="0" width="1" height="1" fill="#000"/><rect x="242" y="15" width="1" height="1" fill="#000"/><rect x="243" y="0" width="1" height="1" fill="#ff8728"/><rect x="243" y="15" width="1" height="1" fill="#ff8728"/><rect x="244" y="0" width="1" height="1" fill="#000"/><rect x="244" y="15" width="1" height="1" fill="#000"/><rect x="245" y="0" width="1" height="1" fill="#ff8728"/><rect x="245" y="15" width="1" height="1" fill="#ff8728"/><rect x="246" y="0" width="1" height="1" fill="#000"/><rect x="246" y="15" width="1" height="1" fill="#000"/><rect x="247" y="0" width="1" height="1" fill="#ff8728"/><rect x="247" y="15" width="1" height="1" fill="#ff8728"/><rect x="248" y="0" width="1" height="1" fill="#000"/><rect x="248" y="15" width="1" height="1" fill="#000"/><rect x="249" y="0" width="1" height="1" fill="#ff8728"/><rect x="249" y="15" width="1" height="1" fill="#ff8728"/><rect x="250" y="0" width="1" height="1" fill="#000"/><rect x="250" y="15" width="1" height="1" fill="#000"/><rect x="251" y="0" width="1" height="1" fill="#ff8728"/><rect x="251" y="15" width="1" height="1" fill="#ff8728"/><rect x="252" y="0" width="1" height="1" fill="#000"/><rect x="252" y="15" width="1" height="1" fill="#000"/><rect x="253" y="0" width="1" height="1" fill="#ff8728"/><rect x="253" y="15" width="1" height="1" fill="#ff8728"/><rect x="254" y="0" width="1" height="1" fill="#000"/><rect x="254" y="15" width="1" height="1" fill="#000"/><rect x="255" y="0" width="1" height="1" fill="#ff8728"/><rect x="255" y="15" width="1" height="1" fill="#ff8728"/><rect x="256" y="0" width="1" height="1" fill="#000"/><rect x="256" y="15" width="1" height="1" fill="#000"/><rect x="257" y="0" width="1" height="1" fill="#ff8728"/><rect x="257" y="15" width="1" height="1" fill="#ff8728"/><rect x="258" y="0" width="1" height="1" fill="#000"/><rect x="258" y="15" width="1" height="1" fill="#000"/><rect x="259" y="0" width="1" height="1" fill="#ff8728"/><rect x="259" y="15" width="1" height="1" fill="#ff8728"/><rect x="260" y="0" width="1" height="1" fill="#000"/><rect x="260" y="15" width="1" height="1" fill="#000"/><rect x="261" y="0" width="1" height="1" fill="#ff8728"/><rect x="261" y="15" width="1" height="1" fill="#ff8728"/><rect x="262" y="0" width="1" height="1" fill="#000"/><rect x="262" y="15" width="1" height="1" fill="#000"/><rect x="263" y="0" width="1" height="1" fill="#ff8728"/><rect x="263" y="15" width="1" height="1" fill="#ff8728"/><rect x="264" y="0" width="1" height="1" fill="#000"/><rect x="264" y="15" width="1" height="1" fill="#000"/><rect x="265" y="0" width="1" height="1" fill="#ff8728"/><rect x="265" y="15" width="1" height="1" fill="#ff8728"/><rect x="266" y="0" width="1" height="1" fill="#000"/><rect x="266" y="15" width="1" height="1" fill="#000"/><rect x="267" y="0" width="1" height="1" fill="#ff8728"/><rect x="267" y="15" width="1" height="1" fill="#ff8728"/><rect x="268" y="0" width="1" height="1" fill="#000"/><rect x="268" y="15" width="1" height="1" fill="#000"/><rect x="269" y="0" width="1" height="1" fill="#ff8728"/><rect x="269" y="15" width="1" height="1" fill="#ff8728"/><rect x="270" y="0" width="1" height="1" fill="#000"/><rect x="270" y="15" width="1" height="1" fill="#000"/><rect x="271" y="0" width="1" height="1" fill="#ff8728"/><rect x="271" y="15" width="1" height="1" fill="#ff8728"/><rect x="272" y="0" width="1" height="1" fill="#000"/><rect x="272" y="15" width="1" height="1" fill="#000"/><rect x="273" y="0" width="1" height="1" fill="#ff8728"/><rect x="273" y="15" width="1" height="1" fill="#ff8728"/><rect x="274" y="0" width="1" height="1" fill="#000"/><rect x="274" y="15" width="1" height="1" fill="#000"/><rect x="275" y="0" width="1" height="1" fill="#ff8728"/><rect x="275" y="15" width="1" height="1" fill="#ff8728"/><rect x="276" y="0" width="1" height="1" fill="#000"/><rect x="276" y="15" width="1" height="1" fill="#000"/><rect x="277" y="0" width="1" height="1" fill="#ff8728"/><rect x="277" y="15" width="1" height="1" fill="#ff8728"/><rect x="278" y="0" width="1" height="1" fill="#000"/><rect x="278" y="15" width="1" height="1" fill="#000"/><rect x="279" y="0" width="1" height="1" fill="#ff8728"/><rect x="279" y="15" width="1" height="1" fill="#ff8728"/><rect x="0" y="1" width="1" height="1" fill="#000"/><rect x="279" y="1" width="1" height="1" fill="#000"/><rect x="0" y="2" width="1" height="1" fill="#ff8728"/><rect x="279" y="2" width="1" height="1" fill="#ff8728"/><rect x="0" y="3" width="1" height="1" fill="#000"/><rect x="279" y="3" width="1" height="1" fill="#000"/><rect x="0" y="4" width="1" height="1" fill="#ff8728"/><rect x="279" y="4" width="1" height="1" fill="#ff8728"/><rect x="0" y="5" width="1" height="1" fill="#000"/><rect x="279" y="5" width="1" height="1" fill="#000"/><rect x="0" y="6" width="1" height="1" fill="#ff8728"/><rect x="279" y="6" width="1" height="1" fill="#ff8728"/><rect x="0" y="7" width="1" height="1" fill="#000"/><rect x="279" y="7" width="1" height="1" fill="#000"/><rect x="0" y="8" width="1" height="1" fill="#ff8728"/><rect x="279" y="8" width="1" height="1" fill="#ff8728"/><rect x="0" y="9" width="1" height="1" fill="#000"/><rect x="279" y="9" width="1" height="1" fill="#000"/><rect x="0" y="10" width="1" height="1" fill="#ff8728"/><rect x="279" y="10" width="1" height="1" fill="#ff8728"/><rect x="0" y="11" width="1" height="1" fill="#000"/><rect x="279" y="11" width="1" height="1" fill="#000"/><rect x="0" y="12" width="1" height="1" fill="#ff8728"/><rect x="279" y="12" width="1" height="1" fill="#ff8728"/><rect x="0" y="13" width="1" height="1" fill="#000"/><rect x="279" y="13" width="1" height="1" fill="#000"/><rect x="0" y="14" width="1" height="1" fill="#ff8728"/><rect x="279" y="14" width="1" height="1" fill="#ff8728"/></svg>
<div style="left:598px;top:161px;width:1px;height:176px;background:#ffffff;"></div>
<div style="left:599px;top:161px;width:16px;height:176px;background:#f0f0f0;"></div>
<div style="left:599px;top:210px;width:15px;height:110px;background:#cdcdcd;"></div>
<svg style="position:absolute;left:603px;top:167px;overflow:visible" width="7" height="6"><path d="M0.5 5.5 L3.5 1.4 L6.5 5.5" fill="none" stroke="#606060" stroke-width="2"/></svg>
<svg style="position:absolute;left:603px;top:326px;overflow:visible" width="7" height="6"><path d="M0.5 0.5 L3.5 4.6 L6.5 0.5" fill="none" stroke="#606060" stroke-width="2"/></svg>
<div class="t" style="left:310.68px;top:303px;font-size:12px;line-height:14px;color:#000;transform:scaleX(0.8243)">Normal</div>
<div style="left:310px;top:259px;width:117px;height:50px;background:#cccccc;"></div>
<div style="left:311px;top:260px;width:115px;height:48px;background:#f2f2f2;"></div>
<div style="left:313px;top:262px;width:112px;height:22px;background:#91c9f7;"></div>
<div style="left:23px;top:364px;width:594px;height:78px;background:#f0f0f0;"></div>
<div style="left:23px;top:364px;width:594px;height:1px;background:#a0a0a0;"></div>
<div style="left:23px;top:364px;width:1px;height:78px;background:#a0a0a0;"></div>
<div style="left:24px;top:365px;width:592px;height:1px;background:#696969;"></div>
<div style="left:24px;top:365px;width:1px;height:76px;background:#696969;"></div>
<div style="left:23px;top:441px;width:594px;height:1px;background:#ffffff;"></div>
<div style="left:616px;top:364px;width:1px;height:78px;background:#ffffff;"></div>
<div style="left:24px;top:440px;width:592px;height:1px;background:#e3e3e3;"></div>
<div style="left:615px;top:365px;width:1px;height:76px;background:#e3e3e3;"></div>
<div style="left:598px;top:366px;width:1px;height:73px;background:#ffffff;"></div>
<svg style="position:absolute;left:603px;top:372px;overflow:visible" width="7" height="6"><path d="M0.5 5.5 L3.5 1.4 L6.5 5.5" fill="none" stroke="#a8a8a8" stroke-width="2"/></svg>
<svg style="position:absolute;left:603px;top:430px;overflow:visible" width="7" height="6"><path d="M0.5 0.5 L3.5 4.6 L6.5 0.5" fill="none" stroke="#a8a8a8" stroke-width="2"/></svg>
<div style="left:0px;top:403px;width:2px;height:4px;background:#5c5c5c;"></div>
<div style="left:1px;top:404px;width:1px;height:2px;background:#3a5a9a;"></div>
<div style="left:0px;top:407px;width:2px;height:22px;background:#d6dae2;"></div>
<div style="left:635px;top:373px;width:1px;height:7px;background:#000;"></div>
<div style="left:634px;top:373px;width:1px;height:7px;background:#fafafa;"></div>
<div style="left:473px;top:468px;width:75px;height:23px;background:#646464;"></div>
<div style="left:474px;top:469px;width:73px;height:21px;background:#f0f0f0;"></div>
<div style="left:474px;top:469px;width:73px;height:1px;background:#ffffff;"></div>
<div style="left:474px;top:469px;width:1px;height:21px;background:#ffffff;"></div>
<div style="left:475px;top:470px;width:71px;height:1px;background:#e3e3e3;"></div>
<div style="left:475px;top:470px;width:1px;height:19px;background:#e3e3e3;"></div>
<div style="left:474px;top:489px;width:73px;height:1px;background:#696969;"></div>
<div style="left:546px;top:469px;width:1px;height:21px;background:#696969;"></div>
<div style="left:475px;top:488px;width:71px;height:1px;background:#a0a0a0;"></div>
<div style="left:545px;top:470px;width:1px;height:19px;background:#a0a0a0;"></div>
<div style="left:555px;top:467px;width:75px;height:23px;background:#f0f0f0;"></div>
<div style="left:555px;top:467px;width:75px;height:1px;background:#ffffff;"></div>
<div style="left:555px;top:467px;width:1px;height:23px;background:#ffffff;"></div>
<div style="left:556px;top:468px;width:73px;height:1px;background:#e3e3e3;"></div>
<div style="left:556px;top:468px;width:1px;height:21px;background:#e3e3e3;"></div>
<div style="left:555px;top:489px;width:75px;height:1px;background:#696969;"></div>
<div style="left:629px;top:467px;width:1px;height:23px;background:#696969;"></div>
<div style="left:556px;top:488px;width:73px;height:1px;background:#a0a0a0;"></div>
<div style="left:628px;top:468px;width:1px;height:21px;background:#a0a0a0;"></div>
<svg style="position:absolute;left:392px;top:267px" width="12" height="19" shape-rendering="crispEdges"><rect x="0" y="0" width="1" height="1" fill="#000"/><rect x="0" y="1" width="1" height="1" fill="#000"/><rect x="1" y="1" width="1" height="1" fill="#000"/><rect x="0" y="2" width="1" height="1" fill="#000"/><rect x="1" y="2" width="1" height="1" fill="#fff"/><rect x="2" y="2" width="1" height="1" fill="#000"/><rect x="0" y="3" width="1" height="1" fill="#000"/><rect x="1" y="3" width="1" height="1" fill="#fff"/><rect x="2" y="3" width="1" height="1" fill="#fff"/><rect x="3" y="3" width="1" height="1" fill="#000"/><rect x="0" y="4" width="1" height="1" fill="#000"/><rect x="1" y="4" width="1" height="1" fill="#fff"/><rect x="2" y="4" width="1" height="1" fill="#fff"/><rect x="3" y="4" width="1" height="1" fill="#fff"/><rect x="4" y="4" width="1" height="1" fill="#000"/><rect x="0" y="5" width="1" height="1" fill="#000"/><rect x="1" y="5" width="1" height="1" fill="#fff"/><rect x="2" y="5" width="1" height="1" fill="#fff"/><rect x="3" y="5" width="1" height="1" fill="#fff"/><rect x="4" y="5" width="1" height="1" fill="#fff"/><rect x="5" y="5" width="1" height="1" fill="#000"/><rect x="0" y="6" width="1" height="1" fill="#000"/><rect x="1" y="6" width="1" height="1" fill="#fff"/><rect x="2" y="6" width="1" height="1" fill="#fff"/><rect x="3" y="6" width="1" height="1" fill="#fff"/><rect x="4" y="6" width="1" height="1" fill="#fff"/><rect x="5" y="6" width="1" height="1" fill="#fff"/><rect x="6" y="6" width="1" height="1" fill="#000"/><rect x="0" y="7" width="1" height="1" fill="#000"/><rect x="1" y="7" width="1" height="1" fill="#fff"/><rect x="2" y="7" width="1" height="1" fill="#fff"/><rect x="3" y="7" width="1" height="1" fill="#fff"/><rect x="4" y="7" width="1" height="1" fill="#fff"/><rect x="5" y="7" width="1" height="1" fill="#fff"/><rect x="6" y="7" width="1" height="1" fill="#fff"/><rect x="7" y="7" width="1" height="1" fill="#000"/><rect x="0" y="8" width="1" height="1" fill="#000"/><rect x="1" y="8" width="1" height="1" fill="#fff"/><rect x="2" y="8" width="1" height="1" fill="#fff"/><rect x="3" y="8" width="1" height="1" fill="#fff"/><rect x="4" y="8" width="1" height="1" fill="#fff"/><rect x="5" y="8" width="1" height="1" fill="#fff"/><rect x="6" y="8" width="1" height="1" fill="#fff"/><rect x="7" y="8" width="1" height="1" fill="#fff"/><rect x="8" y="8" width="1" height="1" fill="#000"/><rect x="0" y="9" width="1" height="1" fill="#000"/><rect x="1" y="9" width="1" height="1" fill="#fff"/><rect x="2" y="9" width="1" height="1" fill="#fff"/><rect x="3" y="9" width="1" height="1" fill="#fff"/><rect x="4" y="9" width="1" height="1" fill="#fff"/><rect x="5" y="9" width="1" height="1" fill="#fff"/><rect x="6" y="9" width="1" height="1" fill="#fff"/><rect x="7" y="9" width="1" height="1" fill="#fff"/><rect x="8" y="9" width="1" height="1" fill="#fff"/><rect x="9" y="9" width="1" height="1" fill="#000"/><rect x="0" y="10" width="1" height="1" fill="#000"/><rect x="1" y="10" width="1" height="1" fill="#fff"/><rect x="2" y="10" width="1" height="1" fill="#fff"/><rect x="3" y="10" width="1" height="1" fill="#fff"/><rect x="4" y="10" width="1" height="1" fill="#fff"/><rect x="5" y="10" width="1" height="1" fill="#fff"/><rect x="6" y="10" width="1" height="1" fill="#fff"/><rect x="7" y="10" width="1" height="1" fill="#fff"/><rect x="8" y="10" width="1" height="1" fill="#fff"/><rect x="9" y="10" width="1" height="1" fill="#fff"/><rect x="10" y="10" width="1" height="1" fill="#000"/><rect x="0" y="11" width="1" height="1" fill="#000"/><rect x="1" y="11" width="1" height="1" fill="#fff"/><rect x="2" y="11" width="1" height="1" fill="#fff"/><rect x="3" y="11" width="1" height="1" fill="#fff"/><rect x="4" y="11" width="1" height="1" fill="#fff"/><rect x="5" y="11" width="1" height="1" fill="#fff"/><rect x="6" y="11" width="1" height="1" fill="#fff"/><rect x="7" y="11" width="1" height="1" fill="#000"/><rect x="8" y="11" width="1" height="1" fill="#000"/><rect x="9" y="11" width="1" height="1" fill="#000"/><rect x="10" y="11" width="1" height="1" fill="#000"/><rect x="11" y="11" width="1" height="1" fill="#000"/><rect x="0" y="12" width="1" height="1" fill="#000"/><rect x="1" y="12" width="1" height="1" fill="#fff"/><rect x="2" y="12" width="1" height="1" fill="#fff"/><rect x="3" y="12" width="1" height="1" fill="#fff"/><rect x="4" y="12" width="1" height="1" fill="#000"/><rect x="5" y="12" width="1" height="1" fill="#fff"/><rect x="6" y="12" width="1" height="1" fill="#fff"/><rect x="7" y="12" width="1" height="1" fill="#000"/><rect x="0" y="13" width="1" height="1" fill="#000"/><rect x="1" y="13" width="1" height="1" fill="#fff"/><rect x="2" y="13" width="1" height="1" fill="#fff"/><rect x="3" y="13" width="1" height="1" fill="#000"/><rect x="4" y="13" width="1" height="1" fill="#000"/><rect x="5" y="13" width="1" height="1" fill="#fff"/><rect x="6" y="13" width="1" height="1" fill="#fff"/><rect x="7" y="13" width="1" height="1" fill="#000"/><rect x="0" y="14" width="1" height="1" fill="#000"/><rect x="1" y="14" width="1" height="1" fill="#fff"/><rect x="2" y="14" width="1" height="1" fill="#000"/><rect x="5" y="14" width="1" height="1" fill="#000"/><rect x="6" y="14" width="1" height="1" fill="#fff"/><rect x="7" y="14" width="1" height="1" fill="#fff"/><rect x="8" y="14" width="1" height="1" fill="#000"/><rect x="0" y="15" width="1" height="1" fill="#000"/><rect x="1" y="15" width="1" height="1" fill="#000"/><rect x="5" y="15" width="1" height="1" fill="#000"/><rect x="6" y="15" width="1" height="1" fill="#fff"/><rect x="7" y="15" width="1" height="1" fill="#fff"/><rect x="8" y="15" width="1" height="1" fill="#000"/><rect x="0" y="16" width="1" height="1" fill="#000"/><rect x="6" y="16" width="1" height="1" fill="#000"/><rect x="7" y="16" width="1" height="1" fill="#fff"/><rect x="8" y="16" width="1" height="1" fill="#fff"/><rect x="9" y="16" width="1" height="1" fill="#000"/><rect x="6" y="17" width="1" height="1" fill="#000"/><rect x="7" y="17" width="1" height="1" fill="#fff"/><rect x="8" y="17" width="1" height="1" fill="#fff"/><rect x="9" y="17" width="1" height="1" fill="#000"/><rect x="7" y="18" width="1" height="1" fill="#000"/><rect x="8" y="18" width="1" height="1" fill="#000"/></svg>
<div class="t" style="left:32.82px;top:11px;font-size:12px;line-height:14px;color:#000;transform:scaleX(0.9799)">HPC and Analysis Options</div>
<div class="t" style="left:18.53px;top:47px;font-size:12px;line-height:14px;color:#000;transform:scaleX(0.8750)">Configurations</div>
<div class="t" style="left:96.52px;top:45px;font-size:12px;line-height:14px;color:#000;transform:scaleX(0.8800)">Options</div>
<div class="t" style="left:23.00px;top:75px;font-size:12px;line-height:14px;color:#000;transform:scaleX(0.8958)">HPC License:</div>
<div class="t" style="left:156.24px;top:76px;font-size:12px;line-height:14px;color:#000;transform:scaleX(0.8636)">Pool</div>
<div class="t" style="left:24.53px;top:102px;font-size:12px;line-height:14px;color:#000;transform:scaleX(0.8655)">Queue all simulations</div>
<div class="t" style="left:22.51px;top:135px;font-size:12px;line-height:14px;color:#000;transform:scaleX(0.8938)">Options for Design Type:</div>
<div class="t" style="left:175.26px;top:136px;font-size:12px;line-height:14px;color:#000;transform:scaleX(0.8419)">HFSS</div>
<div class="t" style="left:152.26px;top:163px;font-size:12px;line-height:14px;color:#000;transform:scaleX(0.8419)">Name</div>
<div class="t" style="left:436.80px;top:163px;font-size:12px;line-height:14px;color:#000;transform:scaleX(0.8400)">Value</div>
<div class="t" style="left:26.23px;top:183px;font-size:12px;line-height:14px;color:#000;transform:scaleX(0.8719)">Remote Spawn Command</div>
<div class="t" style="left:26.23px;top:203px;font-size:12px;line-height:14px;color:#000;transform:scaleX(0.8651)">MPI Version</div>
<div class="t" style="left:26.23px;top:223px;font-size:12px;line-height:14px;color:#f2f2f2;transform:scaleX(0.8705)">HPC Licensing</div>
<div class="t" style="left:26.21px;top:243px;font-size:12px;line-height:14px;color:#fff;transform:scaleX(0.8892)">Enable GPU</div>
<div class="t" style="left:26.22px;top:263px;font-size:12px;line-height:14px;color:#000;transform:scaleX(0.8775)">Enable GPU for SBR+ Solve</div>
<div class="t" style="left:26.25px;top:283px;font-size:12px;line-height:14px;color:#f2f2f2;transform:scaleX(0.8466)">Simulation Controls</div>
<div class="t" style="left:26.23px;top:303px;font-size:12px;line-height:14px;color:#000;transform:scaleX(0.8661)">Default Process Priority</div>
<div class="t" style="left:310.23px;top:183px;font-size:12px;line-height:14px;color:#000;transform:scaleX(0.8739)">SSH</div>
<div class="t" style="left:310.24px;top:203px;font-size:12px;line-height:14px;color:#000;transform:scaleX(0.8622)">Default</div>
<div class="t" style="left:311.11px;top:243px;font-size:12px;line-height:14px;color:#fff;transform:scaleX(0.7929)">False</div>
<div class="t" style="left:23.63px;top:343px;font-size:12px;line-height:14px;color:#000;transform:scaleX(0.8738)">Description:</div>
<div class="t" style="left:27.10px;top:367px;font-size:12px;line-height:14px;color:#000;transform:scaleX(0.8775)">Allow GPU to be used for transient and frequency domain solves.</div>
<div class="t" style="left:26.22px;top:380px;font-size:12px;line-height:14px;color:#000;transform:scaleX(0.8820)">GPU acceleration will be disabled when automatic HPC setting is selected.</div>
<div class="t" style="left:26.21px;top:393px;font-size:12px;line-height:14px;color:#000;transform:scaleX(0.8949)">Batchoption name: &quot;HFSS/EnableGPU&quot; Type: Integer, Allowed Values: 0 (False), 1 (True).</div>
<div class="t" style="left:502.34px;top:472px;font-size:12px;line-height:14px;color:#000;transform:scaleX(0.8562)">OK</div>
<div class="t" style="left:575.75px;top:471px;font-size:12px;line-height:14px;color:#000;transform:scaleX(0.8472)">Cancel</div>
<div class="t" style="left:346.10px;top:266px;font-size:12px;line-height:14px;color:#000;transform:scaleX(0.8667)">True</div>
<div class="t" style="left:345.43px;top:288px;font-size:12px;line-height:14px;font-weight:700;color:#000;transform:scaleX(0.8655)">False</div>
</body></html>
